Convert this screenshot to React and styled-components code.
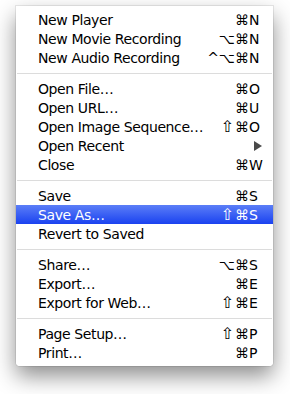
import React from "react";
import styled, { createGlobalStyle } from "styled-components";

const Global = createGlobalStyle`
  html, body { margin: 0; padding: 0; background: #ffffff; }
  body { width: 290px; height: 394px; overflow: hidden; }
`;

const Page = styled.div`
  padding: 6px 17px 0 16px;
`;

const Menu = styled.div`
  width: 257px;
  box-sizing: border-box;
  padding: 4px 0 4px;
  background: rgba(255, 255, 255, 0.98);
  border-radius: 0 0 4px 4px;
  box-shadow: 0 0 0 1px rgba(0, 0, 0, 0.08), 0 10px 22px rgba(0, 0, 0, 0.45);
  font-family: "DejaVu Sans", "Liberation Sans", sans-serif;
  font-size: 14px;
  letter-spacing: -0.4px;
  color: #000;
`;

const Row = styled.div`
  display: flex;
  align-items: center;
  height: 19px;
  padding: 0 9px 0 22px;
  color: ${(p) => (p.$active ? "#ffffff" : "#000000")};
  background: ${(p) =>
    p.$active ? "linear-gradient(#5b7ef7, #1a42f0)" : "transparent"};
`;

const Label = styled.span`
  flex: 1;
  white-space: nowrap;
`;

const Mods = styled.span`
  display: flex;
  align-items: center;
  white-space: nowrap;
  letter-spacing: 0;
`;

const Shift = styled.span`
  font-size: 16px;
  line-height: 1;
  margin-right: 1px;
`;

const Key = styled.span`
  width: 15px;
  text-align: left;
  white-space: nowrap;
  letter-spacing: 0;
`;

const Arrow = styled.span`
  width: 0;
  height: 0;
  margin-right: 2px;
  border-top: 5px solid transparent;
  border-bottom: 5px solid transparent;
  border-left: 8px solid #4a4a4a;
`;

const Separator = styled.div`
  height: 1px;
  margin: 6px 1px 5px 1px;
  background: #dcdcdc;
`;

const groups = [
  [
    ["New Player", "⌘", "N"],
    ["New Movie Recording", "⌥⌘", "N"],
    ["New Audio Recording", "^⌥⌘", "N"],
  ],
  [
    ["Open File…", "⌘", "O"],
    ["Open URL…", "⌘", "U"],
    ["Open Image Sequence…", "⇧⌘", "O"],
    ["Open Recent", null, null, true],
    ["Close", "⌘", "W"],
  ],
  [
    ["Save", "⌘", "S"],
    ["Save As…", "⇧⌘", "S", false, true],
    ["Revert to Saved"],
  ],
  [
    ["Share…", "⌥⌘", "S"],
    ["Export…", "⌘", "E"],
    ["Export for Web…", "⇧⌘", "E"],
  ],
  [
    ["Page Setup…", "⇧⌘", "P"],
    ["Print…", "⌘", "P"],
  ],
];

function Modifiers({ text }) {
  const hasShift = text.startsWith("⇧");
  return (
    <Mods>
      {hasShift && <Shift>⇧</Shift>}
      {hasShift ? text.slice(1) : text}
    </Mods>
  );
}

export default function App() {
  return (
    <>
      <Global />
      <Page>
        <Menu>
          {groups.map((g, gi) => (
            <React.Fragment key={gi}>
              {gi > 0 && <Separator />}
              {g.map(([label, mods, key, sub, active]) => (
                <Row key={label} $active={active}>
                  <Label>{label}</Label>
                  {sub ? (
                    <Arrow />
                  ) : mods ? (
                    <>
                      <Modifiers text={mods} />
                      <Key>{key}</Key>
                    </>
                  ) : null}
                </Row>
              ))}
            </React.Fragment>
          ))}
        </Menu>
      </Page>
    </>
  );
}
